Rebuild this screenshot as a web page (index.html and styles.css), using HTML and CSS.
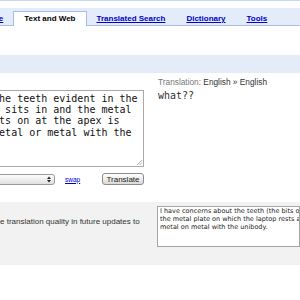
FILE: index.html
```html
<!DOCTYPE html>
<html lang="en">
<head>
    <meta charset="UTF-8">
    <meta name="viewport" content="width=device-width, initial-scale=1.0">
    <title>Translate</title>
    <link rel="stylesheet" href="styles.css">
</head>
<body>
    <div class="topline"></div>
    <div class="tabbar">
        <ul class="tabs">
            <li class="tab"><a href="#">Home</a></li>
            <li class="tab tab-active">Text and Web</li>
            <li class="tab"><a href="#">Translated Search</a></li>
            <li class="tab tab-spaced"><a href="#">Dictionary</a></li>
            <li class="tab tab-spaced"><a href="#">Tools</a></li>
        </ul>
    </div>
    <div class="band"></div>

    <main class="translate">
        <section class="source">
            <div class="source-box">and the teeth evident in the
as it sits in and the metal
it sits on at the apex is
and metal or metal with the<svg class="grip" width="6" height="6" viewBox="0 0 6 6"><path d="M1 6L6 1M3.5 6L6 3.5" stroke="#999" stroke-width="0.8"/></svg></div>
            <div class="controls">
                <div class="select">
                    <svg width="4" height="7" viewBox="0 0 4 7"><path d="M0 3L2 0.5L4 3Z M0 4L2 6.5L4 4Z" fill="#222"/></svg>
                </div>
                <a class="swap" href="#">swap</a>
                <button class="btn">Translate</button>
            </div>
        </section>
        <section class="result">
            <div class="result-label"><span class="muted">Translation:</span> English » English</div>
            <div class="result-text">what??</div>
        </section>
    </main>

    <div class="feedback">
        <p class="feedback-text">Help improve the translation quality in future updates to</p>
        <div class="feedback-box">I have concerns about the teeth (the bits on the
the metal plate on which the laptop rests as it
metal on metal with the unibody.</div>
    </div>
</body>
</html>
```

FILE: styles.css
```css
body {
    margin: 0;
    width: 300px;
    height: 300px;
    overflow: hidden;
    font-family: "Liberation Sans", Arial, sans-serif;
    color: #333;
    background: #fff;
}
.topline {
    height: 1px;
    background: #c9d7f1;
    margin-bottom: 7px;
}
.tabbar {
    padding-top: 3px;
    background: #e5ecf9;
    border-bottom: 1px solid #a6bde9;
    margin-bottom: 29px;
}
.tabs {
    display: flex;
    align-items: flex-end;
    height: 14px;
    margin: 0 0 0 -29px;
    padding: 0;
    list-style: none;
}
.tab {
    padding: 0 10px;
    height: 13px;
    line-height: 13px;
    font-size: 8px;
    font-weight: bold;
    white-space: nowrap;
}
.tab a {
    color: #00c;
}
.tab-spaced {
    margin-left: 1px;
}
.tab-active {
    height: 14px;
    line-height: 13px;
    background: #fff;
    color: #000;
    border: 1px solid #a6bde9;
    border-bottom: none;
    margin-bottom: -1px;
}
.band {
    height: 18px;
    background: #e5ecf9;
}

.translate {
    display: flex;
    margin-left: -35px;
}
.source {
    flex: none;
    width: 179px;
    padding-top: 17px;
}
.source-box {
    position: relative;
    box-sizing: border-box;
    height: 77px;
    border: 1px solid #a9a9a9;
    padding: 1.5px 3px;
    font-family: "DejaVu Sans Mono", monospace;
    font-size: 10px;
    line-height: 11.4px;
    color: #111;
    white-space: pre;
    overflow: hidden;
}
.grip {
    position: absolute;
    right: 1px;
    bottom: 1px;
}
.controls {
    display: flex;
    align-items: center;
    height: 12px;
    margin-top: 6px;
}
.select {
    box-sizing: border-box;
    width: 90px;
    height: 11px;
    border: 1px solid #9a9a9a;
    border-radius: 3px;
    background: linear-gradient(#fdfdfd, #e0e0e0);
    display: flex;
    align-items: center;
    justify-content: flex-end;
    padding-right: 3px;
}
.swap {
    margin-left: 10px;
    font-size: 6.5px;
    color: #00c;
}
.btn {
    margin-left: auto;
    box-sizing: border-box;
    width: 42px;
    height: 12px;
    padding: 0;
    border: 1px solid #8c8c8c;
    border-radius: 3px;
    background: linear-gradient(#fff, #dadada);
    font-family: "Liberation Sans", Arial, sans-serif;
    font-size: 8px;
    color: #222;
}
.result {
    margin-left: 14px;
    padding-top: 4px;
}
.result-label {
    font-size: 8.3px;
    line-height: 10px;
    white-space: nowrap;
}
.muted {
    color: #777;
}
.result-text {
    margin-top: 3px;
    font-family: "DejaVu Sans Mono", monospace;
    font-size: 10px;
    line-height: 12px;
    color: #333;
}

.feedback {
    display: grid;
    grid-template-columns: 196px 1fr;
    column-gap: 17px;
    height: 63px;
    margin: 17px 0 0 -56px;
    background: #f2f2f2;
}
.feedback-text {
    margin: 0;
    padding-top: 15px;
    font-size: 8px;
    line-height: 10px;
    white-space: nowrap;
}
.feedback-box {
    box-sizing: border-box;
    height: 41px;
    margin-top: 4px;
    padding: 0 2px;
    border: 1px solid #a5a5a5;
    background: #fff;
    font-family: "DejaVu Sans", sans-serif;
    font-size: 6.5px;
    line-height: 8px;
    color: #222;
    white-space: pre;
    overflow: hidden;
}
```
